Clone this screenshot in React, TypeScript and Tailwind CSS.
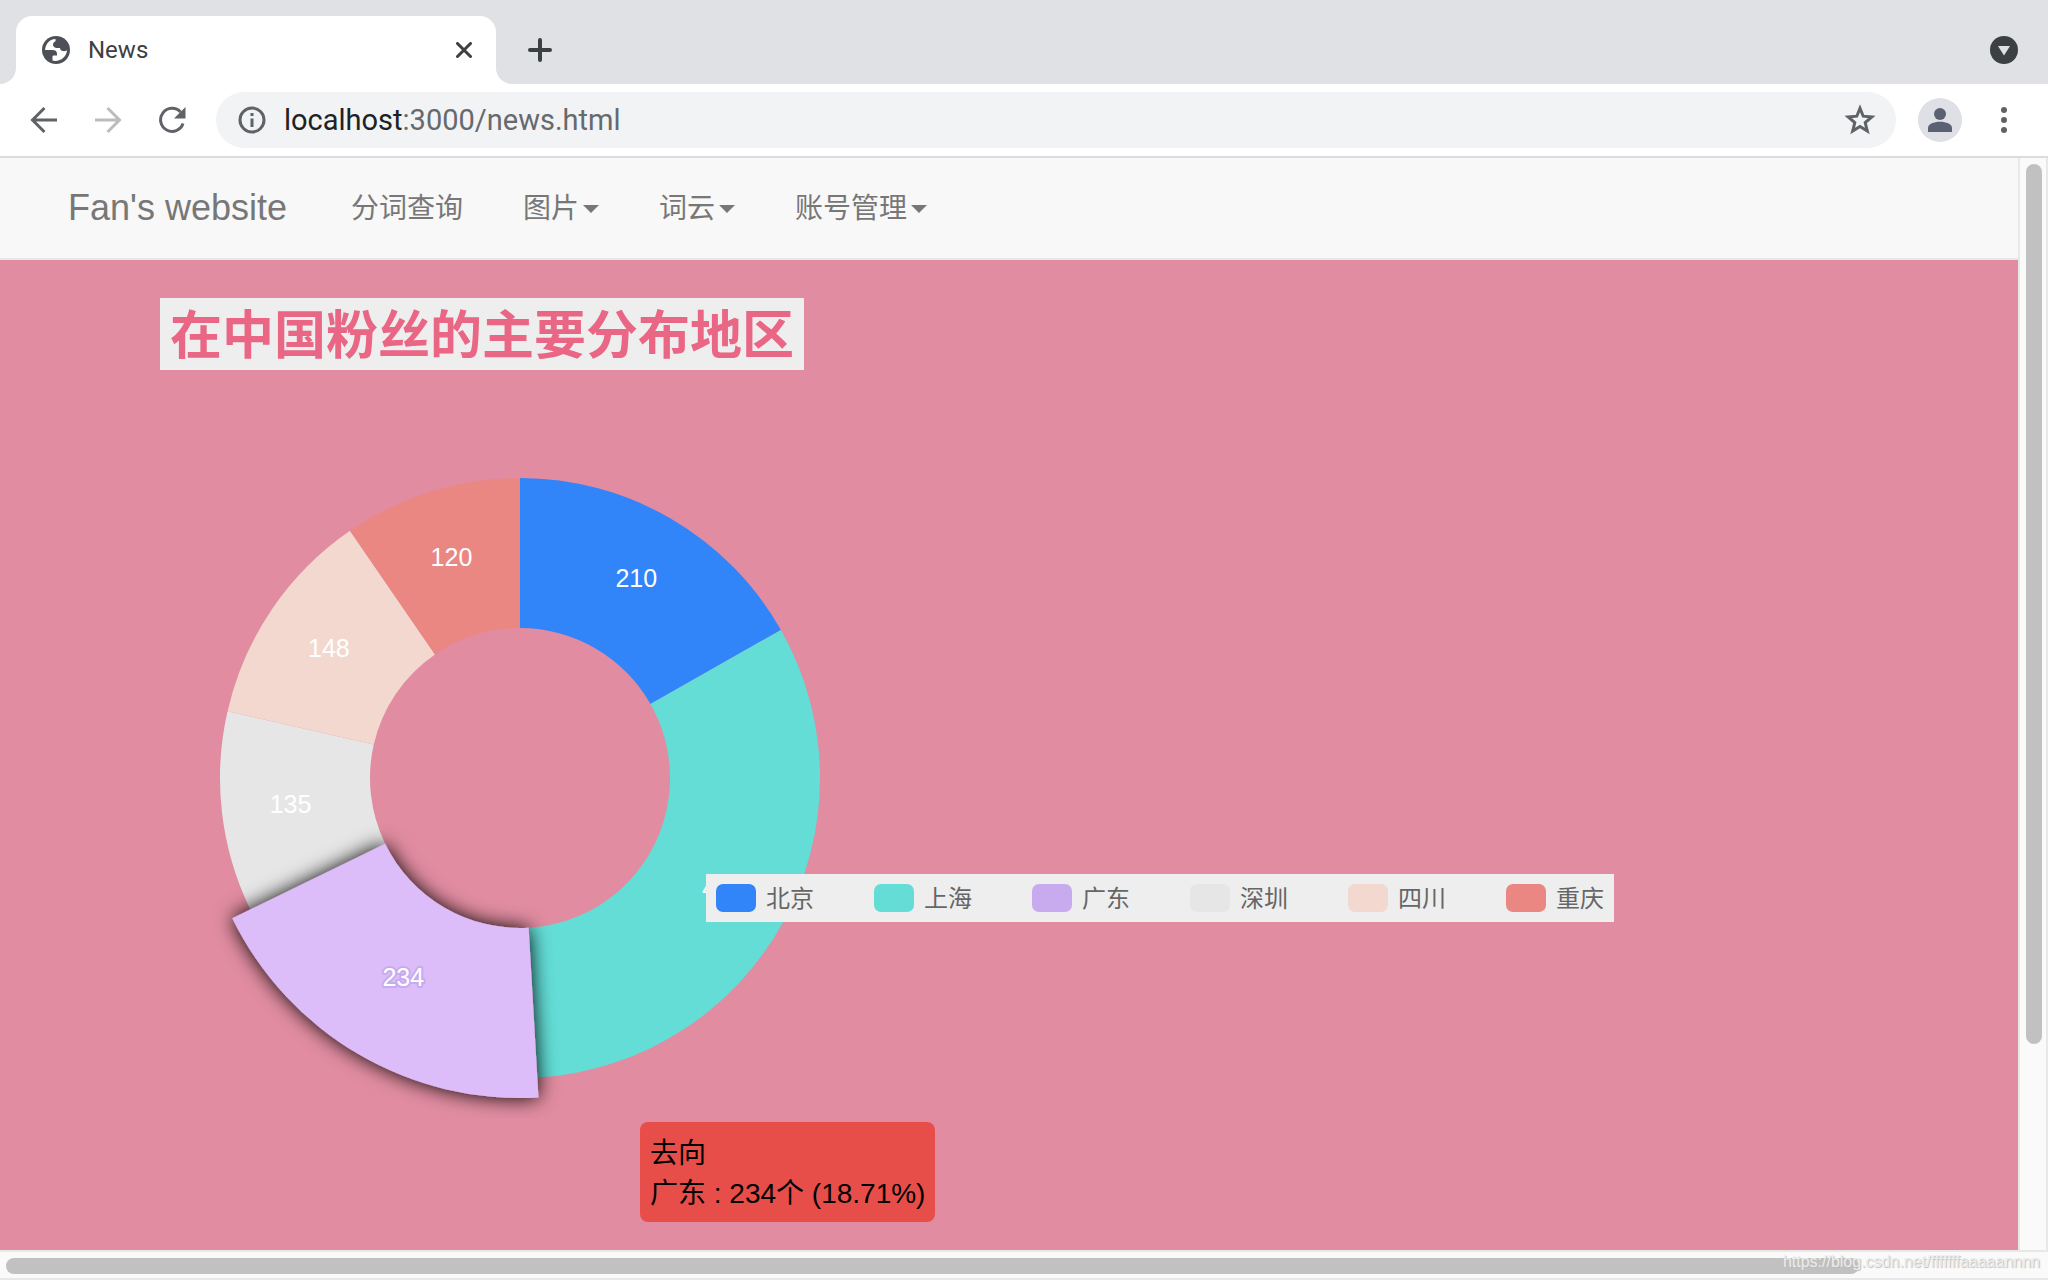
import { useState } from "react";

type City = { name: string; value: number; color: string };

const CITIES: City[] = [
  { name: "北京", value: 210, color: "#3284f9" },
  { name: "上海", value: 404, color: "#63ddd6" },
  { name: "广东", value: 234, color: "#c8abef" },
  { name: "深圳", value: 135, color: "#e6e6e6" },
  { name: "四川", value: 148, color: "#f2d8cf" },
  { name: "重庆", value: 120, color: "#ea8783" },
];

const NAV_ITEMS = [
  { label: "分词查询", menu: false },
  { label: "图片", menu: true },
  { label: "词云", menu: true },
  { label: "账号管理", menu: true },
];

const ACTIVE = "广东";
const ACTIVE_COLOR = "#dcbcf9";
const INNER = 150;
const OUTER = 300;
const OUTER_ACTIVE = 320;
const LABEL_RADIUS = 231;

function point(angle: number, radius: number) {
  return [radius * Math.sin(angle), -radius * Math.cos(angle)];
}

function ringPath(start: number, end: number, outer: number) {
  const large = end - start > Math.PI ? 1 : 0;
  const [x0, y0] = point(start, outer);
  const [x1, y1] = point(end, outer);
  const [x2, y2] = point(end, INNER);
  const [x3, y3] = point(start, INNER);
  return `M${x0} ${y0}A${outer} ${outer} 0 ${large} 1 ${x1} ${y1}L${x2} ${y2}A${INNER} ${INNER} 0 ${large} 0 ${x3} ${y3}Z`;
}

function getSlices() {
  const total = CITIES.reduce((sum, c) => sum + c.value, 0);
  let angle = 0;
  const slices = CITIES.map((c) => {
    const start = angle;
    angle += (c.value / total) * Math.PI * 2;
    return { ...c, start, end: angle, active: c.name === ACTIVE };
  });
  // the highlighted slice is drawn last so its shadow lies over the others
  return slices.sort((a, b) => Number(a.active) - Number(b.active));
}

function Donut() {
  return (
    <svg
      className="block h-[680px] w-[680px] shrink-0"
      viewBox="-340 -340 680 680"
      role="img"
      aria-label="在中国粉丝的主要分布地区"
    >
      <defs>
        <filter id="shadow" x="-20%" y="-20%" width="140%" height="140%">
          <feDropShadow dx="0" dy="0" stdDeviation="10" floodColor="#000" floodOpacity="1" />
        </filter>
      </defs>
      {getSlices().map((s) => {
        const [x, y] = point((s.start + s.end) / 2, LABEL_RADIUS);
        return (
          <g key={s.name}>
            <path
              d={ringPath(s.start, s.end, s.active ? OUTER_ACTIVE : OUTER)}
              fill={s.active ? ACTIVE_COLOR : s.color}
              filter={s.active ? "url(#shadow)" : undefined}
            />
            <text
              x={x}
              y={y + 9}
              textAnchor="middle"
              fontSize="25"
              fill="#fff"
              stroke={s.active ? s.color : "none"}
              strokeWidth="4"
              paintOrder="stroke"
              strokeLinejoin="round"
            >
              {s.value}
            </text>
          </g>
        );
      })}
    </svg>
  );
}

function Legend() {
  return (
    <ul className="flex gap-[60px] bg-[#eee] p-2.5">
      {CITIES.map((c) => (
        <li key={c.name}>
          <button type="button" className="flex h-7 items-center gap-2.5 text-[24px] leading-7 whitespace-nowrap text-[#666]">
            <span className="h-7 w-10 rounded-[7px]" style={{ backgroundColor: c.color }} />
            <span className="pt-0.5">{c.name}</span>
          </button>
        </li>
      ))}
    </ul>
  );
}

function TabStrip() {
  return (
    <div className="flex h-[84px] items-end bg-[#dfe1e5] font-[Roboto,sans-serif]">
      <svg className="h-4 w-4" viewBox="0 0 16 16" aria-hidden="true">
        <path d="M16 0v16H0A16 16 0 0 0 16 0Z" fill="#fff" />
      </svg>
      <div className="flex h-[68px] w-[480px] items-center rounded-t-2xl bg-white pr-5 pl-[26px]">
        <svg className="h-7 w-7" viewBox="0 0 28 28" aria-hidden="true">
          <circle cx="14" cy="14" r="14" fill="#4d5057" />
          <path
            d="M13.500 3C8 3.200 3.800 7.200 3 14h7.500c3 0 4.500 1.600 4.500 4v1.500h-3.500c-1 0-1 .8-1 1.500v3.600c7.500 1.600 14-3.600 14.500-10.400-1.200.9-3.200 1.100-4.500.800-1.600-.4-2.500-1.500-2.500-3h-3c-2.400 0-4-1.600-4-3.600 0-1.600 1.200-2.400 2.500-3.200.2-.9 0-1.600 0-2.200Z"
            fill="#fff"
          />
        </svg>
        <span className="ml-[18px] flex-1 text-[24px] leading-8 text-[#3c4043]">News</span>
        <button type="button" aria-label="Close tab" className="p-1">
          <svg className="h-4 w-4" viewBox="0 0 16 16" fill="none" stroke="#3c4043" strokeWidth="3" strokeLinecap="round">
            <path d="m1.500 1.500 13 13M14.500 1.500l-13 13" />
          </svg>
        </button>
      </div>
      <svg className="h-4 w-4" viewBox="0 0 16 16" aria-hidden="true">
        <path d="M0 0v16h16A16 16 0 0 1 0 0Z" fill="#fff" />
      </svg>
      <div className="flex h-[68px] flex-1 items-center justify-between pr-[30px] pl-4">
        <button type="button" aria-label="New tab">
          <svg className="h-6 w-6" viewBox="0 0 24 24" fill="none" stroke="#3c4043" strokeWidth="4" strokeLinecap="round">
            <path d="M12 2v20M2 12h20" />
          </svg>
        </button>
        <button type="button" aria-label="Search tabs">
          <svg className="h-7 w-7" viewBox="0 0 28 28">
            <circle cx="14" cy="14" r="14" fill="#3c4043" />
            <path d="M8 10h12l-6 9.500Z" fill="#dfe1e5" />
          </svg>
        </button>
      </div>
    </div>
  );
}

function Toolbar() {
  const [path, setPath] = useState(":3000/news.html");
  return (
    <div className="flex h-[74px] items-center border-b-2 border-[#dadce0] bg-white pr-7 pl-[30px] font-[Roboto,sans-serif]">
      <div className="flex items-center gap-9">
        <button type="button" aria-label="Back">
          <svg className="h-7 w-7" viewBox="0 0 28 28" fill="none" stroke="#5f6368" strokeWidth="3">
            <path d="M27 14H3M14.500 2 2.500 14l12 12" />
          </svg>
        </button>
        <button type="button" aria-label="Forward" disabled>
          <svg className="h-7 w-7" viewBox="0 0 28 28" fill="none" stroke="#babcbe" strokeWidth="3">
            <path d="M1 14h24M13.500 2l12 12-12 12" />
          </svg>
        </button>
        <button type="button" aria-label="Reload">
          <svg className="h-7 w-7" viewBox="0 0 28 28">
            <path d="M25 17.500A11.500 11.500 0 1 1 22.500 6" fill="none" stroke="#5f6368" strokeWidth="3" />
            <path d="M27.500 1v11.500H16Z" fill="#5f6368" />
          </svg>
        </button>
      </div>
      <div className="ml-[30px] flex h-14 flex-1 items-center rounded-full bg-[#f1f3f4] pr-5 pl-[22px]">
        <svg className="h-7 w-7 shrink-0" viewBox="0 0 28 28" fill="none" stroke="#5f6368" aria-hidden="true">
          <circle cx="14" cy="14" r="12" strokeWidth="3" />
          <path d="M14 12.500V21M14 7v3" strokeWidth="3" />
        </svg>
        <label htmlFor="address" className="ml-[18px] text-[29px] leading-10 text-[#202124]">
          localhost
        </label>
        <input
          id="address"
          className="min-w-0 flex-1 bg-transparent text-[29px] leading-10 text-[#66696d] outline-none"
          value={path}
          onChange={(e) => setPath(e.target.value)}
        />
        <button type="button" aria-label="Bookmark this page">
          <svg className="h-8 w-8" viewBox="0 0 32 32" fill="none" stroke="#5f6368" strokeWidth="3">
            <path d="m16 4.200 3.200 8 8.600.7-6.600 5.600 2.100 8.500L16 22.500 8.700 27l2.100-8.500-6.600-5.600 8.600-.7Z" />
          </svg>
        </button>
      </div>
      <button type="button" aria-label="Profile" className="ml-[22px] rounded-full bg-[#dee0e5]">
        <svg className="h-11 w-11" viewBox="0 0 44 44" fill="#5a6172">
          <circle cx="22" cy="16" r="6" />
          <path d="M10 34v-4c0-4 6-6.200 12-6.200S34 26 34 30v4Z" />
        </svg>
      </button>
      <button type="button" aria-label="Menu" className="ml-[26px]">
        <svg className="h-8 w-8" viewBox="0 0 32 32" fill="#5f6368">
          <circle cx="16" cy="6" r="3" />
          <circle cx="16" cy="16" r="3" />
          <circle cx="16" cy="26" r="3" />
        </svg>
      </button>
    </div>
  );
}

function Navbar() {
  return (
    <nav className="flex h-[102px] items-center border-b-2 border-[#e7e7e7] bg-[#f8f8f8] pl-[68px] text-[28px] leading-10 text-[#777]">
      <a href="#home" className="mr-16 text-[36px]">
        Fan's website
      </a>
      <div className="flex items-center gap-[60px] pt-0.5">
        {NAV_ITEMS.map((item) =>
          item.menu ? (
            <button key={item.label} type="button" className="flex items-center gap-1">
              {item.label}
              <svg className="h-2 w-4" viewBox="0 0 16 8" fill="currentColor" aria-hidden="true">
                <path d="M0 0h16L8 8Z" />
              </svg>
            </button>
          ) : (
            <a key={item.label} href="#search">
              {item.label}
            </a>
          )
        )}
      </div>
    </nav>
  );
}

export default function App() {
  return (
    <div className="flex h-screen flex-col overflow-hidden bg-[#fafafa] font-['Liberation_Sans','Noto_Sans_CJK_SC',sans-serif]">
      <TabStrip />
      <Toolbar />
      <div className="flex min-h-0 flex-1">
        <div className="flex min-w-0 flex-1 flex-col">
          <Navbar />
          <main className="relative flex-1 overflow-hidden bg-[#e18ca0] px-40 pt-[38px]">
            <h1 className="w-fit bg-[#eee] px-2.5 pt-1 text-[52px] leading-[68px] font-bold text-[#e96684]">
              在中国粉丝的主要分布地区
            </h1>
            <div className="relative mt-[68px] ml-5 w-fit">
              <Donut />
              <div className="absolute top-[436px] left-[526px]">
                <Legend />
              </div>
              <div
                role="tooltip"
                className="absolute top-[684px] left-[460px] rounded-lg bg-[#e84e49] px-2.5 pt-3 pb-2 text-[28px] leading-10 whitespace-nowrap text-black"
              >
                <p>去向</p>
                <p>广东 : 234个 (18.71%)</p>
              </div>
            </div>
          </main>
        </div>
        <div className="w-[30px] border-x-2 border-[#e8e8e8] bg-[#fafafa] px-1.5 pt-1.5" aria-hidden="true">
          <div className="h-[81%] w-4 rounded-full bg-[#c1c1c1]" />
        </div>
      </div>
      <div className="relative h-[30px] border-y-2 border-[#e8e8e8] bg-[#fafafa] px-1.5 pt-1.5">
        <div className="h-4 w-[91%] rounded-full bg-[#c1c1c1]" />
        <p className="absolute right-2 bottom-1.5 text-[16px] leading-5 text-[#ececec] [text-shadow:1px_1px_1px_#bbb]">
          https://blog.csdn.net/fffffffaaaaannnn
        </p>
      </div>
    </div>
  );
}
